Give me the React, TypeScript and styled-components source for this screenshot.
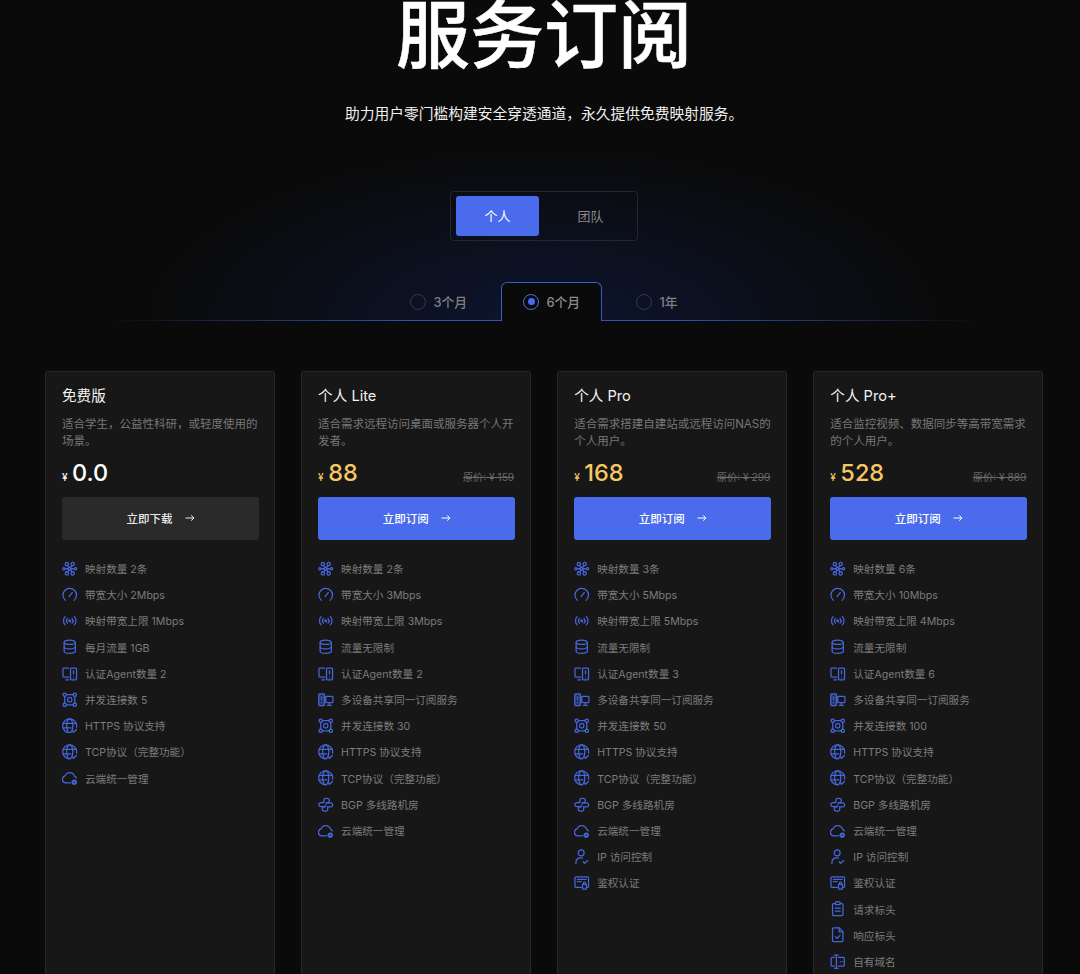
import React from 'react';
import styled, { createGlobalStyle } from 'styled-components';

const GlobalStyle = createGlobalStyle`
  html, body {
    margin: 0;
    padding: 0;
    height: 974px;
    overflow: hidden;
    background: #0a0a0a;
    font-family: Inter, "Noto Sans CJK SC", sans-serif;
    -webkit-font-smoothing: antialiased;
  }
  * { box-sizing: border-box; }
`;

const Page = styled.div`
  height: 974px;
  overflow: hidden;
  padding: 0 37px 0 45px;
  background:
    radial-gradient(ellipse 400px 175px at 50% 100%, rgba(16, 32, 84, 0.5), rgba(10, 10, 10, 0) 100%) 144px 146px / 800px 175px no-repeat,
    #0a0a0a;
`;

const Title = styled.h1`
  margin: 0;
  font-size: 74px;
  line-height: 70px;
  font-weight: 500;
  -webkit-text-stroke: 0.5px #fff;
  color: #fff;
  text-align: center;
`;

const Subtitle = styled.p`
  margin: 34px 0 0;
  font-size: 14.75px;
  line-height: 20px;
  color: #f0f0f0;
  text-align: center;
`;

const ToggleWrap = styled.div`
  display: flex;
  justify-content: center;
  margin-top: 67px;
`;

const Toggle = styled.div`
  display: flex;
  gap: 10px;
  width: 188px;
  height: 50px;
  padding: 4px 5px;
  border: 1px solid #23262c;
  border-radius: 4px;
`;

const ToggleButton = styled.div<{ $active?: boolean }>`
  display: flex;
  align-items: center;
  justify-content: center;
  width: 83px;
  padding-bottom: 1px;
  border-radius: 3px;
  font-size: 13px;
  color: ${({ $active }) => ($active ? '#fff' : '#8a8a8a')};
  background: ${({ $active }) => ($active ? '#4a6cec' : 'transparent')};
`;

const TabRow = styled.div`
  position: relative;
  display: flex;
  justify-content: center;
  gap: 12px;
  margin-top: 41px;
  height: 39px;

  &::after {
    content: '';
    position: absolute;
    left: 60px;
    right: 60px;
    bottom: 0;
    height: 1px;
    background: linear-gradient(90deg, rgba(52, 82, 170, 0), #3452aa 35%, #3452aa 65%, rgba(52, 82, 170, 0));
  }
`;

const Tab = styled.div<{ $active?: boolean }>`
  position: relative;
  z-index: 1;
  display: flex;
  align-items: center;
  gap: 7px;
  padding: 0 21.2px 1px;
  height: 39px;
  font-size: 12.8px;
  font-weight: 500;
  color: ${({ $active }) => ($active ? '#8c8c8c' : '#808080')};
  border: 1px solid ${({ $active }) => ($active ? '#3a5cc4' : 'transparent')};
  border-bottom: none;
  border-radius: 6px 6px 0 0;
  background: ${({ $active }) => ($active ? '#0a0a0a' : 'transparent')};
`;

const Radio = styled.span<{ $active?: boolean }>`
  display: flex;
  align-items: center;
  justify-content: center;
  width: 16px;
  height: 16px;
  border-radius: 50%;
  border: 1px solid ${({ $active }) => ($active ? '#4a6cec' : '#3a3a3c')};

  &::after {
    content: '';
    display: ${({ $active }) => ($active ? 'block' : 'none')};
    width: 7px;
    height: 7px;
    border-radius: 50%;
    background: #4a6cec;
  }
`;

const Cards = styled.div`
  display: grid;
  grid-template-columns: repeat(4, 230.1px);
  gap: 26px;
  align-items: stretch;
  margin-top: 50px;
`;

const Card = styled.div`
  display: flex;
  flex-direction: column;
  height: 800px;
  padding: 13px 15px 0 16px;
  background: #171717;
  border: 1px solid #262626;
  border-radius: 3px;
`;

const CardTitle = styled.h3`
  margin: 0;
  font-size: 14.6px;
  line-height: 22px;
  font-weight: 400;
  color: #f2f2f2;
`;

const CardDesc = styled.p`
  margin: 9px 0 0;
  height: 35px;
  font-size: 11.5px;
  line-height: 17.3px;
  color: #787878;
`;

const PriceRow = styled.div`
  display: flex;
  align-items: baseline;
  justify-content: space-between;
  height: 30px;
  margin-top: 7px;
  padding-right: 1px;
`;

const Price = styled.div<{ $free?: boolean }>`
  display: flex;
  align-items: baseline;
  gap: 4.5px;
  font-size: 23.5px;
  line-height: 30px;
  font-weight: 500;
  color: ${({ $free }) => ($free ? '#fff' : '#f6c763')};
`;

const Yen = styled.span`
  font-size: 10px;
  font-weight: 500;
`;

const OldPrice = styled.span`
  font-size: 10.2px;
  color: #6a6a6a;
  text-decoration: line-through;
`;

const ActionButton = styled.div<{ $free?: boolean }>`
  display: flex;
  align-items: center;
  justify-content: center;
  gap: 12px;
  height: 42.5px;
  margin-top: 9px;
  border-radius: 3px;
  font-size: 11.5px;
  font-weight: 500;
  color: ${({ $free }) => ($free ? '#e8e8e8' : '#fff')};
  background: ${({ $free }) => ($free ? '#2a2a2a' : '#4a6cec')};
`;

const FeatureList = styled.ul`
  list-style: none;
  margin: 16px 0 0;
  padding: 0;
`;

const Feature = styled.li`
  display: flex;
  align-items: center;
  gap: 7.5px;
  height: 26.2px;
  font-size: 10.6px;
  color: #7c7c7c;
`;

const IconBox = styled.svg`
  flex: none;
  width: 15.5px;
  height: 15.5px;
  fill: none;
  stroke: #4566dd;
  stroke-width: 1.3;
  stroke-linecap: round;
  stroke-linejoin: round;
`;

const icons: Record<string, React.ReactNode> = {
  cluster: (
    <>
      <circle cx="5" cy="3.2" r="1.7" />
      <circle cx="11" cy="3.2" r="1.7" />
      <circle cx="5" cy="12.8" r="1.7" />
      <circle cx="11" cy="12.8" r="1.7" />
      <circle cx="8" cy="8" r="1.3" />
      <path d="M5.8 4.8 7.2 6.9M10.2 4.8 8.8 6.9M5.8 11.2 7.2 9.1M10.2 11.2 8.8 9.1" />
      <circle cx="2" cy="8" r="1.2" />
      <circle cx="14" cy="8" r="1.2" />
      <path d="M3.2 8h3.5M9.3 8h3.5" />
    </>
  ),
  gauge: (
    <>
      <path d="M3.6 13.8A7 7 0 1 1 12.4 13.8" />
      <path d="M7.4 10 10.6 5.8" />
    </>
  ),
  signal: (
    <>
      <circle cx="8" cy="8" r="0.9" fill="#4566dd" />
      <path d="M5.7 5.6a3.4 3.4 0 0 0 0 4.8M10.3 5.6a3.4 3.4 0 0 1 0 4.8" />
      <path d="M3.2 3.8a6 6 0 0 0 0 8.4M12.8 3.8a6 6 0 0 1 0 8.4" />
    </>
  ),
  database: (
    <>
      <ellipse cx="8" cy="3.4" rx="5.8" ry="2.2" />
      <path d="M2.2 3.4v9.2c0 1.2 2.6 2.2 5.8 2.2s5.8-1 5.8-2.2V3.4" />
      <path d="M2.2 8c0 1.2 2.6 2.2 5.8 2.2s5.8-1 5.8-2.2" />
    </>
  ),
  agent: (
    <>
      <path d="M7 2.2H1.8a.8.8 0 0 0-.8.8v7.6c0 .4.4.8.8.8H7" />
      <path d="M4 14.2h3" />
      <rect x="8.8" y="2.2" width="6.2" height="12" rx="1" />
      <path d="M11.9 12v.2" />
      <path d="M11.9 5v3" />
    </>
  ),
  share: (
    <>
      <rect x="0.8" y="2" width="5.8" height="12" rx="0.8" fill="rgba(69,102,221,0.35)" />
      <path d="M3.7 5v2.4M3.7 11v.2" />
      <rect x="8" y="4.6" width="7.4" height="6.4" rx="0.7" />
      <path d="M11.7 11v2.8M9.6 13.8h4.2" />
    </>
  ),
  nodes: (
    <>
      <circle cx="2.8" cy="2.8" r="1.7" />
      <circle cx="13.2" cy="2.8" r="1.7" />
      <circle cx="2.8" cy="13.2" r="1.7" />
      <circle cx="13.2" cy="13.2" r="1.7" />
      <path d="M4.5 2.8h7M4.5 13.2h7M2.8 4.5v7M13.2 4.5v7" />
      <rect x="5.9" y="5.9" width="4.2" height="4.2" rx="1" />
    </>
  ),
  globe: (
    <>
      <path d="M15 9.4A7.2 7.2 0 1 0 8.6 15.2" />
      <ellipse cx="8" cy="8" rx="3.2" ry="7.2" />
      <path d="M1.2 5.6h13.6M1.2 10.2h8" />
      <path d="m10.4 13.2 1.6 1.5 2.9-2.9" />
    </>
  ),
  bgp: (
    <>
      <path d="M6 5.8V3.2A1.8 1.8 0 0 1 7.8 1.4h2a1.8 1.8 0 0 1 1.8 1.8v.9a1.7 1.7 0 0 1-1.7 1.7H8.6v1.6" />
      <path d="M10 10.2v2.6a1.8 1.8 0 0 1-1.8 1.8h-2a1.8 1.8 0 0 1-1.8-1.8v-.9a1.7 1.7 0 0 1 1.7-1.7h1.3V8.6" />
      <path d="M6 5.8H2.8A1.8 1.8 0 0 0 1 7.6v.6a1.8 1.8 0 0 0 1.8 1.8h3.4" />
      <path d="M10 10.2h3.2A1.8 1.8 0 0 0 15 8.4v-.6a1.8 1.8 0 0 0-1.8-1.8H9.8" />
    </>
  ),
  cloud: (
    <>
      <path d="M8.8 13.2H4A3.6 3.6 0 0 1 3.2 6.1 5 5 0 0 1 12.8 6.3c.8.3 1.6 1 2 1.8" />
      <circle cx="12.6" cy="12.6" r="2.2" fill="#4566dd" strokeDasharray="1.4 0.6" />
      <circle cx="12.6" cy="12.6" r="0.8" fill="#171717" stroke="none" />
    </>
  ),
  user: (
    <>
      <circle cx="7.4" cy="4" r="3" />
      <path d="M2 15v-1a4.8 4.8 0 0 1 4.2-4.8h2.6" />
      <path d="m9.6 13.2 1.6 1.5 3-3" />
    </>
  ),
  auth: (
    <>
      <path d="M7.5 12.8H2a1 1 0 0 1-1-1V3a1 1 0 0 1 1-1h12a1 1 0 0 1 1 1v8.8a1 1 0 0 1-1 1" />
      <path d="M3.4 4.4h9.2M3.4 6.8h4" />
      <rect x="8.8" y="9.8" width="4" height="4.8" rx="0.6" />
      <path d="M9.6 9.8V8.6a1.2 1.2 0 0 1 2.4 0v1.2" />
    </>
  ),
  clipboard: (
    <>
      <rect x="2.6" y="2.6" width="10.8" height="12.6" rx="1.2" />
      <rect x="5.6" y="1" width="4.8" height="2.8" rx="0.6" fill="#171717" />
      <path d="M5.4 7.4h5.2M5.4 10.4h5.2" />
    </>
  ),
  file: (
    <>
      <path d="M9.6 1H3.6a1 1 0 0 0-1 1v12a1 1 0 0 0 1 1h8.8a1 1 0 0 0 1-1V4.8z" />
      <path d="M9.4 1.2v3.8h3.8" />
      <path d="m5.6 10 1.8 1.7 3-3" />
    </>
  ),
  domain: (
    <>
      <path d="M4.6 3.4H2.2a1 1 0 0 0-1 1v7.2a1 1 0 0 0 1 1h2.4" />
      <path d="M8.6 3.4h5.2a1 1 0 0 1 1 1v7.2a1 1 0 0 1-1 1H8.6" />
      <path d="M6.6 1.4v13.2M4.8 1.2h3.6M4.8 14.8h3.6" />
      <path d="M10.6 8h.1M12.6 8h.1" />
    </>
  ),
};

const Icon = ({ name }: { name: string }) => <IconBox viewBox="0 0 16 16">{icons[name]}</IconBox>;

const Arrow = () => (
  <svg width="10" height="8" viewBox="0 0 10 8" fill="none" stroke="currentColor" strokeWidth="1">
    <path d="M0.5 4H9M6.2 1.4 9 4 6.2 6.6" />
  </svg>
);

interface Plan {
  name: string;
  desc: string;
  price: string;
  oldPrice?: string;
  action: string;
  free?: boolean;
  features: [string, string][];
}

const plans: Plan[] = [
  {
    name: '免费版',
    desc: '适合学生，公益性科研，或轻度使用的场景。',
    price: '0.0',
    action: '立即下载',
    free: true,
    features: [
      ['cluster', '映射数量 2条'],
      ['gauge', '带宽大小 2Mbps'],
      ['signal', '映射带宽上限 1Mbps'],
      ['database', '每月流量 1GB'],
      ['agent', '认证Agent数量 2'],
      ['nodes', '并发连接数 5'],
      ['globe', 'HTTPS 协议支持'],
      ['globe', 'TCP协议（完整功能）'],
      ['cloud', '云端统一管理'],
    ],
  },
  {
    name: '个人 Lite',
    desc: '适合需求远程访问桌面或服务器个人开发者。',
    price: '88',
    oldPrice: '原价: ¥ 159',
    action: '立即订阅',
    features: [
      ['cluster', '映射数量 2条'],
      ['gauge', '带宽大小 3Mbps'],
      ['signal', '映射带宽上限 3Mbps'],
      ['database', '流量无限制'],
      ['agent', '认证Agent数量 2'],
      ['share', '多设备共享同一订阅服务'],
      ['nodes', '并发连接数 30'],
      ['globe', 'HTTPS 协议支持'],
      ['globe', 'TCP协议（完整功能）'],
      ['bgp', 'BGP 多线路机房'],
      ['cloud', '云端统一管理'],
    ],
  },
  {
    name: '个人 Pro',
    desc: '适合需求搭建自建站或远程访问NAS的个人用户。',
    price: '168',
    oldPrice: '原价: ¥ 299',
    action: '立即订阅',
    features: [
      ['cluster', '映射数量 3条'],
      ['gauge', '带宽大小 5Mbps'],
      ['signal', '映射带宽上限 5Mbps'],
      ['database', '流量无限制'],
      ['agent', '认证Agent数量 3'],
      ['share', '多设备共享同一订阅服务'],
      ['nodes', '并发连接数 50'],
      ['globe', 'HTTPS 协议支持'],
      ['globe', 'TCP协议（完整功能）'],
      ['bgp', 'BGP 多线路机房'],
      ['cloud', '云端统一管理'],
      ['user', 'IP 访问控制'],
      ['auth', '鉴权认证'],
    ],
  },
  {
    name: '个人 Pro+',
    desc: '适合监控视频、数据同步等高带宽需求的个人用户。',
    price: '528',
    oldPrice: '原价: ¥ 889',
    action: '立即订阅',
    features: [
      ['cluster', '映射数量 6条'],
      ['gauge', '带宽大小 10Mbps'],
      ['signal', '映射带宽上限 4Mbps'],
      ['database', '流量无限制'],
      ['agent', '认证Agent数量 6'],
      ['share', '多设备共享同一订阅服务'],
      ['nodes', '并发连接数 100'],
      ['globe', 'HTTPS 协议支持'],
      ['globe', 'TCP协议（完整功能）'],
      ['bgp', 'BGP 多线路机房'],
      ['cloud', '云端统一管理'],
      ['user', 'IP 访问控制'],
      ['auth', '鉴权认证'],
      ['clipboard', '请求标头'],
      ['file', '响应标头'],
      ['domain', '自有域名'],
    ],
  },
];

const periods = [
  { label: '3个月' },
  { label: '6个月', active: true },
  { label: '1年' },
];

export default function App() {
  return (
    <Page>
      <GlobalStyle />
      <Title>服务订阅</Title>
      <Subtitle>助力用户零门槛构建安全穿透通道，永久提供免费映射服务。</Subtitle>

      <ToggleWrap>
        <Toggle>
          <ToggleButton $active>个人</ToggleButton>
          <ToggleButton>团队</ToggleButton>
        </Toggle>
      </ToggleWrap>

      <TabRow>
        {periods.map((p) => (
          <Tab key={p.label} $active={p.active}>
            <Radio $active={p.active} />
            {p.label}
          </Tab>
        ))}
      </TabRow>

      <Cards>
        {plans.map((plan) => (
          <Card key={plan.name}>
            <CardTitle>{plan.name}</CardTitle>
            <CardDesc>{plan.desc}</CardDesc>
            <PriceRow>
              <Price $free={plan.free}>
                <Yen>¥</Yen>
                {plan.price}
              </Price>
              {plan.oldPrice && <OldPrice>{plan.oldPrice}</OldPrice>}
            </PriceRow>
            <ActionButton $free={plan.free}>
              {plan.action}
              <Arrow />
            </ActionButton>
            <FeatureList>
              {plan.features.map(([icon, text]) => (
                <Feature key={text}>
                  <Icon name={icon} />
                  {text}
                </Feature>
              ))}
            </FeatureList>
          </Card>
        ))}
      </Cards>
    </Page>
  );
}
